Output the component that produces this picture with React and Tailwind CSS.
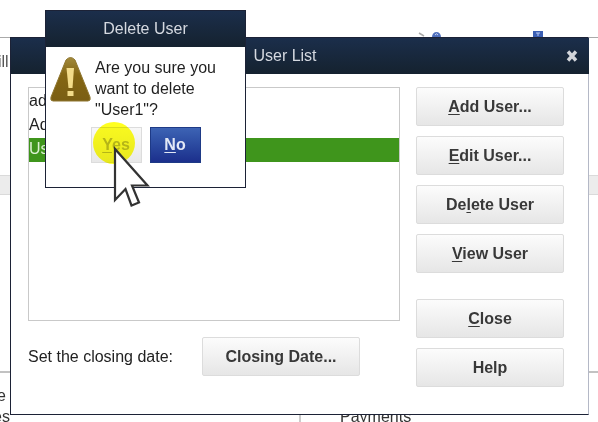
import { useState } from "react";

const USERS = ["admin", "Admin2", "User1"];

function ActionButton({ children, className = "" }) {
  return (
    <button
      type="button"
      className={`h-[39px] rounded-xs border border-[#dcdcdc] bg-linear-to-b from-[#fcfcfc] to-[#e6e6e6] text-base font-bold text-[#383838] ${className}`}
    >
      {children}
    </button>
  );
}

function Key({ children }) {
  return <span className="underline decoration-1 underline-offset-2">{children}</span>;
}

function CompanyPage() {
  return (
    <div className="flex min-h-screen flex-col text-base text-[#333]">
      {/* Toolbar icons peeking out above the window */}
      <div className="flex h-[38px] items-end justify-between border-b border-[#aaa]">
        <span />
        <div className="flex items-end gap-[92px] pr-[55px]">
          <svg width="24" height="6" viewBox="0 0 24 6" aria-hidden="true">
            <path d="M2 2 L7 5" stroke="#aaa" strokeWidth="1.5" fill="none" />
            <path d="M15 6 A4.5 5 0 0 1 24 6 Z" fill="#5070bd" />
            <path d="M18 4 Q19.5 1.500 21 4" stroke="#c5d2f2" fill="none" />
          </svg>
          <svg width="10" height="6" viewBox="0 0 10 6" aria-hidden="true">
            <rect width="10" height="6" fill="#3b5fb4" />
            <path d="M3 2 H7 M5 2 V5" stroke="#b9caf2" />
          </svg>
        </div>
      </div>
      <div className="-ml-0.5 h-[137px] pt-3 text-[#555]">ill</div>
      <div className="h-5 border-y border-[#dadada] bg-[#ececec]" />
      <div className="h-[176px]" />
      <div className="grid flex-1 grid-cols-2 border-t-2 border-[#c2c2c2] leading-[21px]">
        <div className="flex w-[10px] flex-col items-end pt-3">
          <span className="pr-1">e</span>
          <span>es</span>
        </div>
        <div className="border-l-2 border-[#ccc] pt-[33px] pl-[39px]">Payments</div>
      </div>
    </div>
  );
}

function UserListWindow() {
  const [user, setUser] = useState("User1");

  return (
    <section className="absolute top-[37px] right-[9px] left-[10px] border border-[#1c2236] border-r-[#b4b8c6] bg-white">
      <header className="-mr-px flex h-9 items-center bg-linear-to-b from-[#1b2e4b] to-[#15222f] text-[#d5d9e0]">
        <h2 className="flex-1 pl-1 text-center text-base">User List</h2>
        <button type="button" aria-label="Close window" className="flex w-[34px] justify-center">
          <svg width="12" height="12" viewBox="0 0 12 12">
            <path d="M2 1.500 L10 10.500 M10 1.500 L2 10.500" stroke="#d3d6db" strokeWidth="3.400" />
          </svg>
        </button>
      </header>

      <div className="flex gap-4 pt-[13px] pr-6 pb-[27px] pl-[17px]">
        <div className="flex flex-1 flex-col gap-4">
          <select
            size={4}
            aria-label="Users"
            value={user}
            onChange={(e) => setUser(e.target.value)}
            className="h-[234px] w-full overflow-hidden rounded-none border border-[#c9c9c9] bg-white pt-0.5 text-base text-[#222] outline-none"
          >
            {USERS.map((name) => (
              <option
                key={name}
                value={name}
                className="h-6 p-0 pt-0.5 leading-[22px] text-[#222] checked:bg-linear-to-b checked:from-[#3f951c] checked:to-[#3f951c] checked:[-webkit-text-fill-color:#dcf0d2]"
              >
                {name}
              </option>
            ))}
          </select>
          <div className="flex items-center gap-[29px]">
            <label htmlFor="closing-date" className="text-base text-[#222]">
              Set the closing date:
            </label>
            <button
              id="closing-date"
              type="button"
              className="h-[39px] w-[158px] rounded-xs border border-[#dcdcdc] bg-linear-to-b from-[#fcfcfc] to-[#e6e6e6] text-base font-bold text-[#383838]"
            >
              Closing Date...
            </button>
          </div>
        </div>

        <div className="flex w-[148px] flex-col gap-[10px]">
          <ActionButton><Key>A</Key>dd User...</ActionButton>
          <ActionButton><Key>E</Key>dit User...</ActionButton>
          <ActionButton>De<Key>l</Key>ete User</ActionButton>
          <ActionButton><Key>V</Key>iew User</ActionButton>
          <ActionButton className="mt-4"><Key>C</Key>lose</ActionButton>
          <ActionButton>Help</ActionButton>
        </div>
      </div>
    </section>
  );
}

function WarningIcon() {
  return (
    <svg width="41" height="45" viewBox="0 0 41 45" className="shrink-0" aria-hidden="true">
      <defs>
        <linearGradient id="warn" x1="0" y1="0" x2="0" y2="1">
          <stop offset="0" stopColor="#a28a3c" />
          <stop offset="0.4" stopColor="#846613" />
          <stop offset="1" stopColor="#7a5e14" />
        </linearGradient>
      </defs>
      <path
        d="M16 3 Q20.500 -2 25 3 L40 40 Q41 44 38 44 H3 Q0 44 1 40 Z"
        fill="url(#warn)"
        stroke="#8f7630"
      />
      <path d="M16.500 11 H24 L22.500 31 H18.500 Z" fill="#f3dc8a" />
      <rect x="17.500" y="34" width="6" height="5" fill="#f3dc8a" />
    </svg>
  );
}

function DeleteUserDialog() {
  return (
    <section
      role="dialog"
      aria-labelledby="delete-title"
      className="absolute top-[10px] left-[45px] w-[201px] border border-[#1c2236] bg-white"
    >
      <header className="flex h-9 items-center justify-center bg-linear-to-b from-[#1b2e4b] to-[#15222f]">
        <h2 id="delete-title" className="text-base text-[#d5d9e0]">Delete User</h2>
      </header>
      <div className="flex gap-1 px-1 pt-[10px]">
        <WarningIcon />
        <p className="text-base leading-[21px] text-[#1f1f1f]">
          Are you sure you want to delete "User1"?
        </p>
      </div>
      <div className="flex justify-center gap-2 pt-[7px] pb-6">
        <button
          type="button"
          className="relative h-9 w-[51px] border border-[#dcdcdc] bg-linear-to-b from-[#f8f8f8] to-[#e8e8e8] text-base font-bold text-[#b5b5b5]"
        >
          <Key>Y</Key>es
          {/* Click highlight and mouse pointer */}
          <span className="absolute -top-[6px] left-px size-[42px] rounded-full bg-[#ffff20] mix-blend-multiply" />
          <svg
            width="38"
            height="62"
            viewBox="0 0 38 62"
            className="absolute top-[18px] left-[21px]"
            aria-hidden="true"
          >
            <path
              d="M2 3 V54 L12.500 43 L18.500 59.500 L26 56.500 L19 39.500 H34.500 Z"
              fill="#fff"
              stroke="#333"
              strokeWidth="2.200"
            />
          </svg>
        </button>
        <button
          type="button"
          className="h-9 w-[51px] border border-[#1e3a86] bg-linear-to-b from-[#3d63b4] to-[#1c2f8c] text-base font-bold text-[#e2e8f6]"
        >
          <Key>N</Key>o
        </button>
      </div>
    </section>
  );
}

export default function App() {
  return (
    <main className="relative min-h-screen overflow-hidden bg-white font-['Liberation_Sans',Arial,sans-serif]">
      <CompanyPage />
      <UserListWindow />
      <DeleteUserDialog />
    </main>
  );
}
